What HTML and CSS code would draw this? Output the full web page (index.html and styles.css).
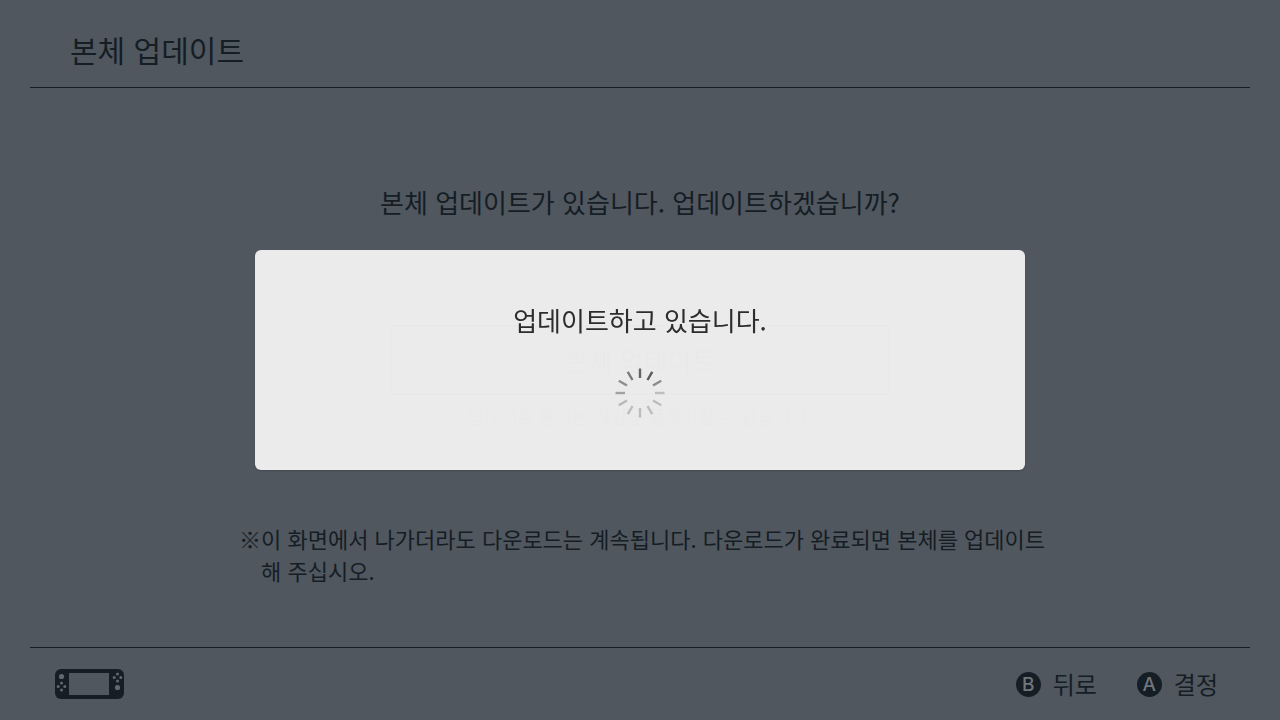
FILE: index.html
```html
<!DOCTYPE html>
<html lang="ko">
<head>
<meta charset="utf-8">
<meta name="viewport" content="width=device-width, initial-scale=1">
<title>본체 업데이트</title>
<link rel="stylesheet" href="styles.css">
</head>
<body class="screen">
<header class="header"><h1 class="title">본체 업데이트</h1></header>
<main class="content">
  <p class="prompt">본체 업데이트가 있습니다. 업데이트하겠습니까?</p>
  <button class="update" type="button">본체 업데이트</button>
  <p class="hint">업데이트 중에는 게임을 플레이할 수 없습니다.</p>
  <p class="note"><span>※</span><span>이 화면에서 나가더라도 다운로드는 계속됩니다. 다운로드가 완료되면 본체를 업데이트해 주십시오.</span></p>
</main>
<footer class="footer">
  <svg class="console" viewBox="0 0 70 30" aria-hidden="true">
    <rect class="ink" width="69" height="30" rx="6"/>
    <rect class="hole" x="14" y="4" width="40" height="22"/>
    <g class="dot">
      <circle cx="6.5" cy="7.5" r="2.6"/><circle cx="6.5" cy="14" r="1.5"/><circle cx="6.5" cy="21" r="1.5"/><circle cx="3.2" cy="17.5" r="1.5"/><circle cx="9.8" cy="17.5" r="1.5"/>
      <circle cx="62.5" cy="18.5" r="2.6"/><circle cx="62.5" cy="5" r="1.5"/><circle cx="62.5" cy="12" r="1.5"/><circle cx="59.2" cy="8.5" r="1.5"/><circle cx="65.8" cy="8.5" r="1.5"/>
    </g>
  </svg>
  <div class="actions">
    <button class="action" type="button"><span class="key">B</span>뒤로</button>
    <button class="action" type="button"><span class="key">A</span>결정</button>
  </div>
</footer>
<div class="overlay">
  <section class="dialog" role="dialog" aria-modal="true" aria-labelledby="status">
    <p class="status" id="status">업데이트하고 있습니다.</p>
    <svg class="spinner" viewBox="-25 -25 50 50" aria-hidden="true">
      <path d="M0-24.5V-15" stroke="#646464"/>
      <path d="M0-24.5V-15" stroke="#5a5a5a" transform="rotate(30)"/>
      <path d="M0-24.5V-15" stroke="#8c8c8c" transform="rotate(60)"/>
      <path d="M0-24.5V-15" stroke="#bdbdbd" transform="rotate(90)"/>
      <path d="M0-24.5V-15" stroke="#bdbdbd" transform="rotate(120)"/>
      <path d="M0-24.5V-15" stroke="#bdbdbd" transform="rotate(150)"/>
      <path d="M0-24.5V-15" stroke="#bdbdbd" transform="rotate(180)"/>
      <path d="M0-24.5V-15" stroke="#bdbdbd" transform="rotate(210)"/>
      <path d="M0-24.5V-15" stroke="#b8b8b8" transform="rotate(240)"/>
      <path d="M0-24.5V-15" stroke="#a2a2a2" transform="rotate(270)"/>
      <path d="M0-24.5V-15" stroke="#8e8e8e" transform="rotate(300)"/>
      <path d="M0-24.5V-15" stroke="#7a7a7a" transform="rotate(330)"/>
    </svg>
  </section>
</div>
</body>
</html>
```
FILE: styles.css
```css
* { box-sizing: border-box; }
h1, p { margin: 0; font-weight: 400; }
button { font: inherit; color: inherit; background: none; border: 0; padding: 0; }

.screen {
  --ink: #151d25;
  --ground: #50575e;
  margin: 0;
  min-height: 100vh;
  display: flex;
  flex-direction: column;
  background: var(--ground);
  color: var(--ink);
  font-family: "Noto Sans CJK KR", sans-serif;
  word-break: break-all;
}

.header {
  margin: 0 30px;
  padding: 27px 40px 16px;
  border-bottom: 1px solid var(--ink);
}
.title { font-size: 30px; line-height: 44px; }

.content {
  flex: 1;
  display: flex;
  flex-direction: column;
  align-items: center;
  padding: 94px 32px 32px;
}
.prompt { font-size: 26px; line-height: 40px; }
.update {
  width: 100%;
  max-width: 500px;
  margin-top: 103px;
  padding: 14px;
  border: 2px solid var(--ink);
  font-size: 26px;
  line-height: 38px;
}
.hint { margin-top: 5px; font-size: 18px; line-height: 32px; }
.note {
  display: flex;
  width: 100%;
  max-width: 814px;
  margin-top: 90px;
  padding-left: 6px;
  font-size: 22px;
  line-height: 32px;
}

.footer {
  margin: 0 30px;
  padding: 0 32px 0 25px;
  min-height: 73px;
  display: flex;
  align-items: center;
  justify-content: space-between;
  border-top: 1px solid var(--ink);
}
.console { width: 70px; height: 30px; }
.ink { fill: var(--ink); }
.hole { fill: var(--ground); }
.dot { fill: #62686e; }
.actions { display: flex; gap: 40px; }
.action {
  display: flex;
  align-items: center;
  gap: 12px;
  font-size: 24px;
  line-height: 32px;
}
.key {
  width: 25px;
  height: 25px;
  border-radius: 50%;
  background: var(--ink);
  color: #70767b;
  font: 500 19px/25px Inter, sans-serif;
  text-align: center;
}

.overlay {
  position: fixed;
  inset: 0;
  display: grid;
  place-items: center;
  padding: 16px;
}
.dialog {
  width: 100%;
  max-width: 770px;
  min-height: 220px;
  padding: 50px 24px;
  display: flex;
  flex-direction: column;
  align-items: center;
  gap: 28px;
  border-radius: 6px;
  background: rgba(239, 239, 239, 0.975);
  box-shadow: 0 1px 2px rgba(0, 0, 0, 0.15);
}
.status { color: #2d2d2d; font-size: 26px; line-height: 40px; }
.spinner { width: 50px; height: 50px; fill: none; stroke-width: 2.4; }
```
